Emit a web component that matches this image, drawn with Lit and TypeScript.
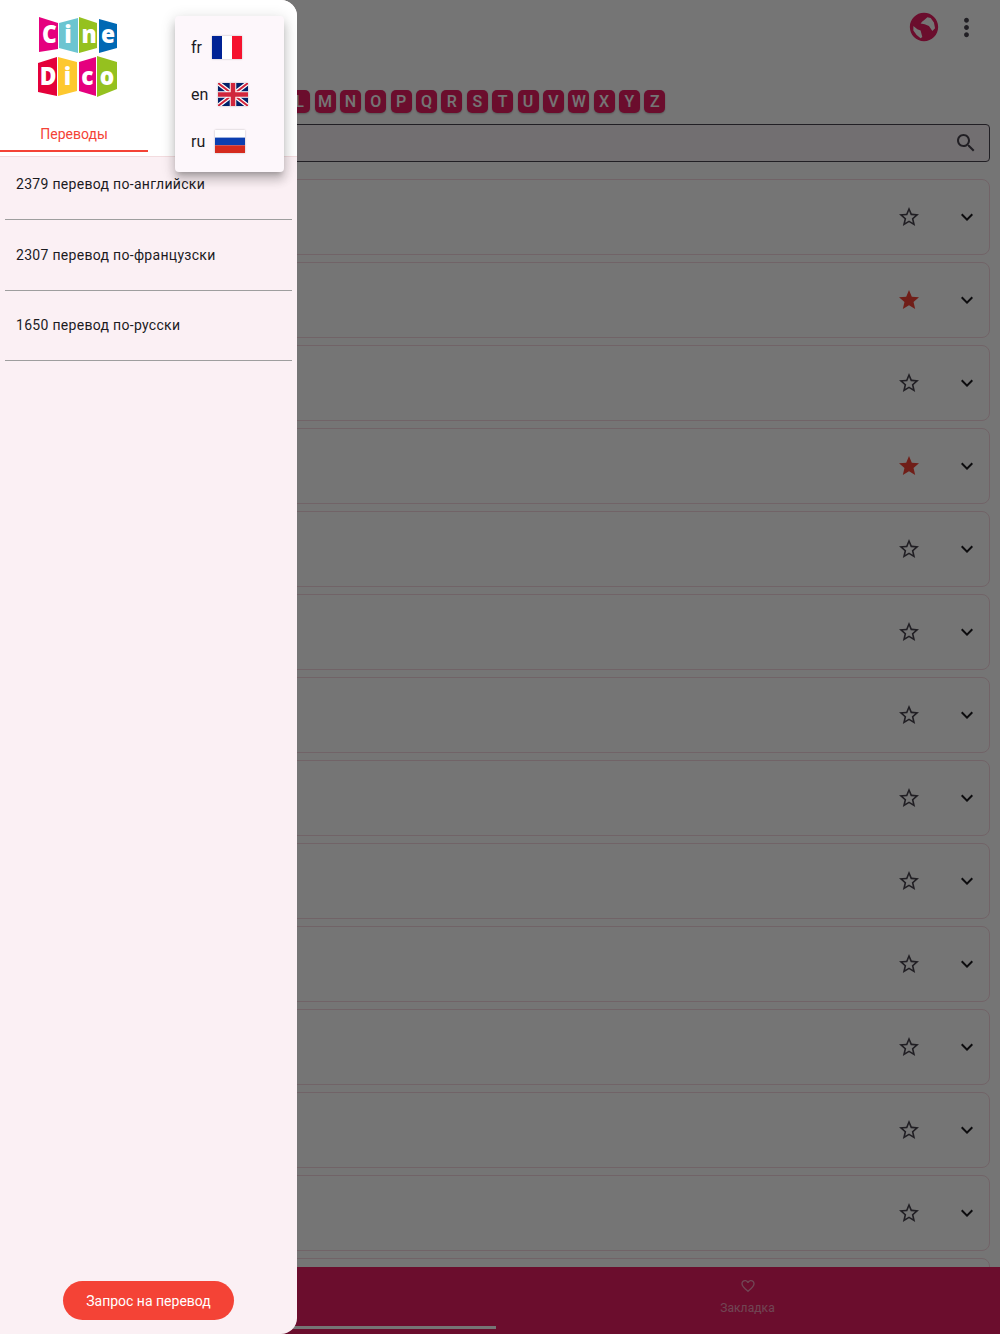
import { LitElement, html, css, svg } from "lit";
import { customElement } from "lit/decorators.js";

const LETTERS = "ABCDEFGHIJKLMNOPQRSTUVWXYZ".split("");
const FAVS = new Set([1, 3]);
const STAR = "M12 17.27L18.18 21l-1.64-7.03L22 9.24l-7.19-.61L12 2 9.19 8.63 2 9.24l5.46 4.73L5.82 21z";
const STAR_O = "M22 9.24l-7.19-.62L12 2 9.19 8.63 2 9.24l5.46 4.73L5.82 21 12 17.27 18.18 21l-1.63-7.03L22 9.24zM12 15.4l-3.76 2.27 1-4.28-3.32-2.88 4.38-.38L12 6.1l1.71 4.04 4.38.38-3.32 2.88 1 4.28L12 15.4z";

const PANELS: [string, string][] = [
  ["#e5007e", "39,17 58,23 58,49 39,52"],
  ["#6cc5d1", "59,23 78,18 78,53 59,48"],
  ["#95c11f", "79,17 97,23 97,48 79,53"],
  ["#0069b4", "99,19 117,24 117,48 99,53"],
  ["#e4003a", "38,63 57,57 57,96 38,92"],
  ["#fdc82f", "58,57 77,62 77,91 58,96"],
  ["#e5007e", "79,62 96,57 96,96 79,91"],
  ["#95c11f", "97,56 117,62 117,89 97,97"],
];
const LOGO_TEXT: [string, number, number][] = [
  ["C", 49.5, 43], ["i", 68, 43], ["n", 89, 43], ["e", 108, 43],
  ["D", 48, 85], ["i", 67.5, 85], ["c", 87.5, 85], ["o", 107, 85],
];

@customElement("app-root")
export class AppRoot extends LitElement {
  static styles = css`
    :host { display: block; position: relative; width: 1000px; height: 1334px; overflow: hidden; font-family: Roboto, "Noto Sans", sans-serif; background: #fff; }
    svg { display: block; }
    .page { display: flex; flex-direction: column; height: 1334px; }
    .top { display: flex; align-items: center; justify-content: flex-end; gap: 11px; height: 54px; padding-right: 19px; flex: none; }
    .globe { width: 34px; height: 34px; fill: #e91e63; }
    .more { width: 29px; height: 29px; fill: #49454f; }
    .letters { display: flex; gap: 4.38px; margin: 36px 0 0 10px; flex: none; }
    .letter { width: 21px; height: 23px; flex: none; border-radius: 5px; background: #e91e63; color: #fff; font-size: 16px; font-weight: 500; display: flex; align-items: center; justify-content: center; box-shadow: 0 1px 2px rgba(0,0,0,.25); }
    .search { margin: 11px 10px 0; height: 38px; flex: none; box-sizing: border-box; border: 1px solid #49454f; border-radius: 4px; background: #f9f2f6; display: flex; align-items: center; justify-content: flex-end; padding-right: 11px; }
    .search svg { width: 24px; height: 24px; fill: #49454f; }
    .list { flex: 1; min-height: 0; overflow: hidden; display: flex; flex-direction: column; gap: 7px; margin: 17px 10px 0; }
    .card { flex: none; height: 76px; box-sizing: border-box; border: 1px solid #f6d8e0; border-radius: 8px; background: #fff; display: flex; align-items: center; justify-content: flex-end; gap: 34px; padding-right: 10px; }
    .card svg { width: 24px; height: 24px; fill: #1c1b1f; }
    .card svg.star { fill: #49454f; }
    .card svg.fav { fill: #f44336; }
    .bottom { flex: none; height: 67px; background: #e91e63; display: grid; grid-template-columns: 1fr 1fr; }
    .tab { display: flex; flex-direction: column; align-items: center; padding: 11px 5px 0 0; color: rgba(255,255,255,.55); font-size: 12px; letter-spacing: .1px; font-weight: 400; gap: 7px; }
    .tab svg { width: 16px; height: 16px; fill: currentColor; }
    .scrim { position: absolute; inset: 0; background: rgba(0,0,0,.54); }
    .home { position: absolute; left: 0; width: 496px; top: 1326px; height: 3px; background: #757575; }
    .drawer { position: absolute; left: 0; top: 0; bottom: 0; width: 297px; background: #fbf0f4; border-radius: 0 16px 16px 0; overflow: hidden; display: flex; flex-direction: column; }
    .head { background: #fff; height: 156px; flex: none; border-bottom: 1px solid #f3dcdf; position: relative; display: flex; flex-direction: column; justify-content: flex-end; }
    .logo { position: absolute; left: 0; top: 0; }
    .logo text { font-family: "Open Sans", sans-serif; font-weight: 800; font-size: 24px; fill: #fff; text-anchor: middle; }
    .tabname { width: 148px; height: 42px; margin-bottom: 4px; box-sizing: border-box; border-bottom: 2px solid #f44336; color: #f44336; font-size: 14px; text-align: center; line-height: 36px; padding-top: 6px; }
    .rows { display: flex; flex-direction: column; gap: 24.4px; padding: 17.4px 5px 0; flex: 1; }
    .row { height: 46px; box-sizing: border-box; border-bottom: 1px solid #9e9e9e; padding-left: 11px; font-size: 14px; line-height: 20px; letter-spacing: .3px; color: #1c1b1f; }
    .foot { flex: none; display: flex; justify-content: center; padding-bottom: 14px; }
    .request { width: 171px; height: 39px; border-radius: 20px; background: #f44336; color: #fff; font-size: 14px; font-weight: 400; display: flex; align-items: center; justify-content: center; }
    .menu { position: absolute; left: 175px; top: 16px; width: 109px; height: 156px; box-sizing: border-box; padding: 7.5px 0; background: #fdf7fb; border-radius: 4px; box-shadow: 0 5px 5px -3px rgba(0,0,0,.2), 0 8px 10px 1px rgba(0,0,0,.14), 0 3px 14px 2px rgba(0,0,0,.12); display: flex; flex-direction: column; }
    .opt { height: 47px; flex: none; display: flex; align-items: center; gap: 10px; padding-left: 16px; font-size: 16px; color: #1c1b1f; }
    .flag { width: 30px; height: 23px; flex: none; box-shadow: 0 0 2px rgba(0,0,0,.25); }
  `;

  private flagFr() {
    return html`<svg class="flag" viewBox="0 0 30 23"><rect width="10" height="23" fill="#002395"/><rect x="10" width="10" height="23" fill="#fff"/><rect x="20" width="10" height="23" fill="#f5132e"/></svg>`;
  }
  private flagEn() {
    return html`<svg class="flag" viewBox="0 0 30 23"><rect width="30" height="23" fill="#012169"/>
      <path d="M0 0L30 23M30 0L0 23" stroke="#fff" stroke-width="4.5"/>
      <path d="M0 0L30 23M30 0L0 23" stroke="#d0263c" stroke-width="2"/>
      <path d="M15 0V23M0 11.5H30" stroke="#fff" stroke-width="6.5"/>
      <path d="M15 0V23M0 11.5H30" stroke="#d0263c" stroke-width="4.6"/></svg>`;
  }
  private flagRu() {
    return html`<svg class="flag" viewBox="0 0 30 23"><rect width="30" height="8" fill="#fff"/><rect y="7.6" width="30" height="7.7" fill="#0b3fb0"/><rect y="15.3" width="30" height="7.7" fill="#d52b1e"/></svg>`;
  }

  render() {
    return html`
      <div class="page">
        <div class="top">
          <svg class="globe" viewBox="0 0 24 24"><path fill-rule="evenodd" d="M12 2C6.48 2 2 6.48 2 12s4.48 10 10 10 10-4.48 10-10S17.52 2 12 2zM12 7.3L14.4 5.2 16.7 5.6 19 8.9 19.8 12.9 17.9 14.8 15.5 11.3 12.5 10.1 9.6 9.6 10.8 8.2zM4.5 11.3L7.3 13.6 9.6 14.4 10.8 19 9.6 20 6.8 17.6 4.5 14.4z"/></svg>
          <svg class="more" viewBox="0 0 24 24"><path d="M12 8c1.1 0 2-.9 2-2s-.9-2-2-2-2 .9-2 2 .9 2 2 2zm0 2c-1.1 0-2 .9-2 2s.9 2 2 2 2-.9 2-2-.9-2-2-2zm0 6c-1.1 0-2 .9-2 2s.9 2 2 2 2-.9 2-2-.9-2-2-2z"/></svg>
        </div>
        <div class="letters">${LETTERS.map((l) => html`<div class="letter">${l}</div>`)}</div>
        <div class="search">
          <svg viewBox="0 0 24 24"><path d="M15.5 14h-.79l-.28-.27C15.41 12.59 16 11.11 16 9.5 16 5.91 13.09 3 9.5 3S3 5.91 3 9.5 5.91 16 9.5 16c1.61 0 3.09-.59 4.23-1.57l.27.28v.79l5 4.99L20.49 19l-4.99-5zm-6 0C7.01 14 5 11.99 5 9.5S7.01 5 9.5 5 14 7.01 14 9.5 11.99 14 9.5 14z"/></svg>
        </div>
        <div class="list">
          ${Array.from({ length: 14 }, (_, i) => html`
            <div class="card">
              <svg class=${FAVS.has(i) ? "fav" : "star"} viewBox="0 0 24 24"><path d=${FAVS.has(i) ? STAR : STAR_O}/></svg>
              <svg viewBox="0 0 24 24"><path d="M16.59 8.59L12 13.17 7.41 8.59 6 10l6 6 6-6z"/></svg>
            </div>`)}
        </div>
        <div class="bottom">
          <div class="tab"></div>
          <div class="tab">
            <svg viewBox="0 0 24 24"><path d="M16.5 3c-1.74 0-3.41.81-4.5 2.09C10.91 3.81 9.24 3 7.5 3 4.42 3 2 5.42 2 8.5c0 3.78 3.4 6.86 8.55 11.54L12 21.35l1.45-1.32C18.6 15.36 22 12.28 22 8.5 22 5.42 19.58 3 16.5 3zm-4.4 15.55l-.1.1-.1-.1C7.14 14.24 4 11.39 4 8.5 4 6.5 5.5 5 7.5 5c1.54 0 3.04.99 3.57 2.36h1.87C13.46 5.99 14.96 5 16.5 5c2 0 3.5 1.5 3.5 3.5 0 2.89-3.14 5.74-7.9 10.05z"/></svg>
            <span>Закладка</span>
          </div>
        </div>
      </div>
      <div class="scrim"></div>
      <div class="home"></div>
      <div class="drawer">
        <div class="head">
          <svg class="logo" width="130" height="105" viewBox="0 0 130 105">
            ${PANELS.map(([c, p]) => svg`<polygon points=${p} fill=${c}/>`)}
            ${LOGO_TEXT.map(([t, x, y]) => svg`<text transform="translate(${x} ${y}) scale(.95 1)">${t}</text>`)}
          </svg>
          <div class="tabname">Переводы</div>
        </div>
        <div class="rows">
          <div class="row">2379 перевод по-английски</div>
          <div class="row">2307 перевод по-французски</div>
          <div class="row">1650 перевод по-русски</div>
        </div>
        <div class="foot"><div class="request">Запрос на перевод</div></div>
      </div>
      <div class="menu">
        <div class="opt">fr ${this.flagFr()}</div>
        <div class="opt">en ${this.flagEn()}</div>
        <div class="opt">ru ${this.flagRu()}</div>
      </div>
    `;
  }
}
